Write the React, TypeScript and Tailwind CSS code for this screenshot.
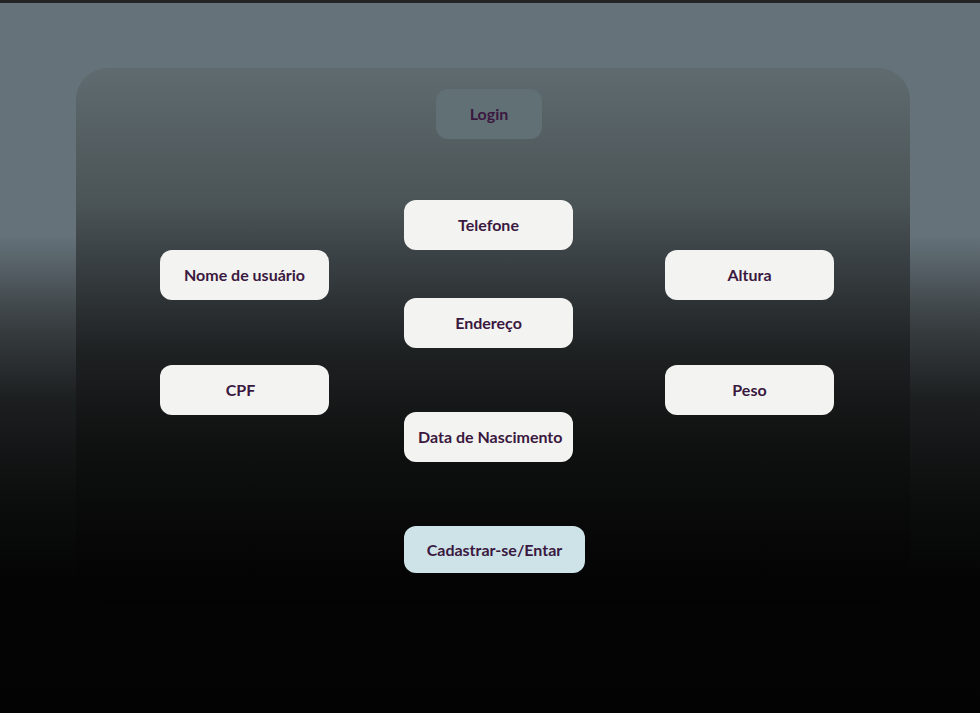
import React from 'react';

const field =
  'w-[169px] h-[50px] rounded-[12px] bg-[#f3f3f1] flex items-center justify-center text-[16px] font-bold text-[#3a1840] whitespace-nowrap';

const App: React.FC = () => {
  return (
    <div className="min-h-[713px] w-full flex flex-col font-['Lato',sans-serif] bg-[linear-gradient(180deg,#242424_0px,#242424_3px,#65727a_3px,#65727a_33%,#3a4043_45%,#1c1f20_56%,#0c0d0d_70%,#040404_82%,#030303_100%)]">
      {/* Card */}
      <div className="mt-[68px] ml-[76px] w-[834px] h-[535px] rounded-[32px] flex flex-col bg-[linear-gradient(180deg,#5f6b6f_0%,#4b5457_25%,#2e3336_43%,#1e2122_53%,#0f1010_71%,#060606_90%,#030303_100%)]">
        <div className="pt-[21px] pl-[360px]">
          <div className="w-[106px] h-[50px] rounded-[12px] bg-[#617074] flex items-center justify-center text-[16px] font-bold text-[#3a1840]">
            Login
          </div>
        </div>

        <div className="flex">
          {/* left column */}
          <div className="ml-[84px] mt-[111px] flex flex-col gap-[65px]">
            <div className={field}>Nome de usuário</div>
            <div className={`${field} pr-[8px]`}>CPF</div>
          </div>

          {/* center column */}
          <div className="ml-[75px] mt-[61px] flex flex-col">
            <div className={field}>Telefone</div>
            <div className={`${field} mt-[48px]`}>Endereço</div>
            <div className={`${field} mt-[64px] pl-[14px] justify-start`}>Data de Nascimento</div>
            <div className="mt-[64px] w-[181px] h-[47px] rounded-[12px] bg-[#cde3e8] flex items-center justify-center text-[16px] font-bold text-[#3a1840]">
              Cadastrar-se/Entar
            </div>
          </div>

          {/* right column */}
          <div className="ml-[80px] mt-[111px] flex flex-col gap-[65px]">
            <div className={field}>Altura</div>
            <div className={field}>Peso</div>
          </div>
        </div>
      </div>
    </div>
  );
};

export default App;
